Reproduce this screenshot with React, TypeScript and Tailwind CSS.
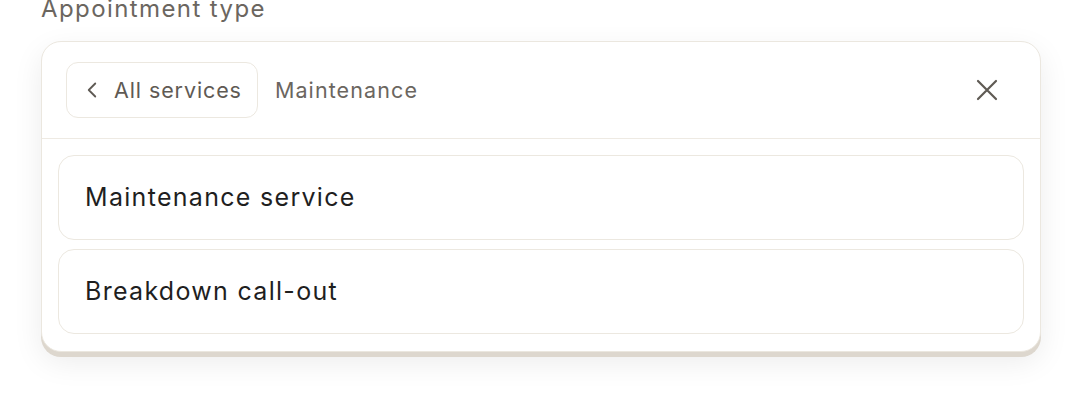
import { ChevronLeft } from "lucide-react";

const items = ["Maintenance service", "Breakdown call-out"];

export default function App() {
  return (
    <div
      className="h-[394px] w-[1082px] overflow-hidden bg-white"
      style={{ fontFamily: "Inter, 'Noto Sans', sans-serif" }}
    >
      <div className="px-[41px]">
        <div className="-mt-[6px] mb-[17px] text-[24px] leading-[30px] tracking-[1.4px] text-[#6b665f]">
          Appointment type
        </div>
        <div className="w-[1000px] rounded-[20px] border border-[#ebe7df] bg-white shadow-[0_5px_0_#ddd7ce,0_10px_30px_rgba(0,0,0,0.08)]">
          <div className="flex h-[97px] items-center border-b border-[#eeeae3] pl-[24px] pr-[42px]">
            <button className="flex h-[56px] items-center gap-[9px] rounded-[12px] border border-[#ece8e0] pl-[12px] pr-[15px] text-[21.5px] tracking-[0.9px] text-[#5f5a54]">
              <ChevronLeft size={26} strokeWidth={1.7} />
              All services
            </button>
            <span className="ml-[17px] text-[21.5px] tracking-[1.1px] text-[#6b665f]">
              Maintenance
            </span>
            <svg
              width="22"
              height="22"
              viewBox="0 0 22 22"
              className="ml-auto text-[#5f5a54]"
              aria-hidden
            >
              <path
                d="M2 2 L20 20 M20 2 L2 20"
                stroke="currentColor"
                strokeWidth="2.2"
                strokeLinecap="round"
              />
            </svg>
          </div>
          <div className="flex flex-col gap-[9px] px-[16px] pb-[17px] pt-[16px]">
            {items.map((t) => (
              <div
                key={t}
                className="flex h-[85px] items-center rounded-[16px] border border-[#ece8e0] px-[26px] text-[25px] tracking-[1.3px] text-[#1f1f1f]"
              >
                {t}
              </div>
            ))}
          </div>
        </div>
      </div>
    </div>
  );
}
